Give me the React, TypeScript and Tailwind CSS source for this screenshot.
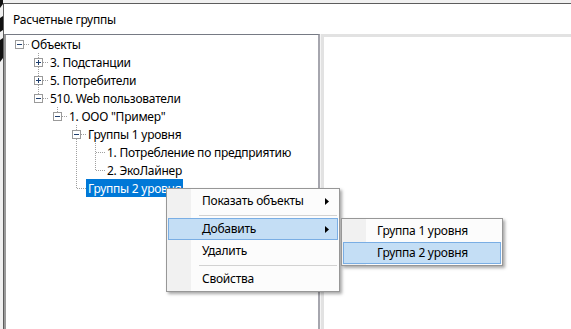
import React from "react";

type Node = {
  label: string;
  children?: Node[];
  expanded?: boolean;
  selected?: boolean;
};

const tree: Node = {
  label: "Объекты",
  expanded: true,
  children: [
    { label: "3. Подстанции", children: [{ label: "x" }], expanded: false },
    { label: "5. Потребители", children: [{ label: "x" }], expanded: false },
    {
      label: "510. Web пользователи",
      expanded: true,
      children: [
        {
          label: '1. ООО "Пример"',
          expanded: true,
          children: [
            {
              label: "Группы 1 уровня",
              expanded: true,
              children: [
                { label: "1. Потребление по предприятию" },
                { label: "2. ЭкоЛайнер" },
              ],
            },
            { label: "Группы 2 уровня", selected: true },
          ],
        },
      ],
    },
  ],
};

type Row = {
  node: Node;
  level: number;
  isLast: boolean;
  isRoot: boolean;
  ancestorsCont: boolean[];
};

function flatten(node: Node, level: number, isLast: boolean, isRoot: boolean, anc: boolean[], out: Row[]) {
  out.push({ node, level, isLast, isRoot, ancestorsCont: anc });
  if (node.expanded && node.children) {
    node.children.forEach((c, i) => {
      const last = i === node.children!.length - 1;
      flatten(c, level + 1, last, false, isRoot ? [...anc, false] : [...anc, !isLast], out);
    });
  }
}

const LINE = "#a0a0a0";

function AncCell({ cont }: { cont: boolean }) {
  return (
    <svg width="19" height="18" className="shrink-0 block">
      {cont && <line x1="9.5" y1="0" x2="9.5" y2="18" stroke={LINE} strokeDasharray="1 1" />}
    </svg>
  );
}

function NodeCell({ row }: { row: Row }) {
  const hasKids = !!row.node.children;
  return (
    <svg width="19" height="18" className="shrink-0 block">
      {!row.isRoot && (
        <line x1="9.5" y1="0" x2="9.5" y2={row.isLast ? 9 : 18} stroke={LINE} strokeDasharray="1 1" />
      )}
      <line x1="10" y1="9.5" x2="19" y2="9.5" stroke={LINE} strokeDasharray="1 1" />
      {hasKids && (
        <g>
          <rect x="5.5" y="5.5" width="8" height="8" fill="#ffffff" stroke="#9a9a9a" />
          <rect x="7" y="9" width="5" height="1" fill="#1f3f6e" />
          {!row.node.expanded && <rect x="9" y="7" width="1" height="5" fill="#1f3f6e" />}
        </g>
      )}
    </svg>
  );
}

function TreeRow({ row }: { row: Row }) {
  return (
    <div className="flex h-[18px] items-stretch pl-[4px]">
      {row.ancestorsCont.map((c, i) => (
        <AncCell key={i} cont={c} />
      ))}
      <NodeCell row={row} />
      <span
        className={
          "flex items-center px-[2px] pt-[1px] whitespace-nowrap " +
          (row.node.selected ? "bg-[#0078d7] text-white" : "text-black")
        }
      >
        {row.node.label}
      </span>
    </div>
  );
}

function Arrow() {
  return (
    <svg width="4" height="7" className="block">
      <path d="M0 0 L4 3.5 L0 7 Z" fill="#000" />
    </svg>
  );
}

function MenuItem({ label, hi, sub }: { label: string; hi?: boolean; sub?: boolean }) {
  return (
    <div
      className={
        "h-[22px] flex items-center justify-between pl-[33px] pr-[8px] border " +
        (hi ? "border-[#7aaee4] bg-[#c4def5]" : "border-transparent")
      }
    >
      <span className="whitespace-nowrap">{label}</span>
      {sub && <Arrow />}
    </div>
  );
}

function Sep() {
  return (
    <div className="h-[6px] flex items-center pl-[31px] pr-[1px]">
      <div className="h-px w-full bg-[#d2d2d2]" />
    </div>
  );
}

export default function App() {
  const rows: Row[] = [];
  flatten(tree, 0, true, true, [], rows);

  return (
    <div
      className="relative w-[571px] h-[329px] overflow-hidden bg-[#f0f0f0] flex text-[12px] tracking-[-0.25px] text-black"
      style={{ fontFamily: '"Noto Sans", "Open Sans", sans-serif' }}
    >
      <div className="w-[3px] shrink-0">
        <svg width="3" height="70" className="block">
          <path d="M0 0 L3 0 L3 4 L0 8 Z" fill="#111" />
          <path d="M0 18 L3 16 L3 30 L0 32 Z" fill="#111" />
          <path d="M0 40 L3 38 L3 58 L0 62 Z" fill="#111" />
        </svg>
      </div>
      <div className="flex-1 mt-[3px] flex flex-col border-l border-t border-[#5c5c5c] bg-[#f0f0f0]">
        <div className="h-[30px] bg-white flex items-center pl-[9px] pt-[1px] whitespace-nowrap">Расчетные группы</div>
        <div className="flex-1 flex">
          <div className="w-[316px] shrink-0 bg-white border-l-2 border-l-[#9a9a9a] border-t border-t-[#767a84] border-r-2 border-r-[#a6a6ae]">
            {rows.map((r, i) => (
              <TreeRow key={i} row={r} />
            ))}
          </div>
          <div className="w-px bg-[#f4f4f4]" />
          <div className="flex-1 bg-white border-l-[3px] border-t-[3px] border-[#e2e2e2]" />
        </div>
      </div>

      <div className="absolute left-[166px] top-[188px] w-[174px] border border-[#979797] shadow-[2px_2px_3px_rgba(0,0,0,0.35)] bg-[linear-gradient(to_right,#f1f1f1_0,#f1f1f1_24px,#fcfcfc_24px)] p-[1px]">
        <MenuItem label="Показать объекты" sub />
        <Sep />
        <MenuItem label="Добавить" sub hi />
        <MenuItem label="Удалить" />
        <Sep />
        <MenuItem label="Свойства" />
      </div>

      <div className="absolute left-[341px] top-[218px] w-[162px] border border-[#979797] shadow-[2px_2px_3px_rgba(0,0,0,0.35)] bg-[linear-gradient(to_right,#f1f1f1_0,#f1f1f1_24px,#fcfcfc_24px)] p-[1px]">
        <MenuItem label="Группа 1 уровня" />
        <MenuItem label="Группа 2 уровня" hi />
      </div>
    </div>
  );
}
